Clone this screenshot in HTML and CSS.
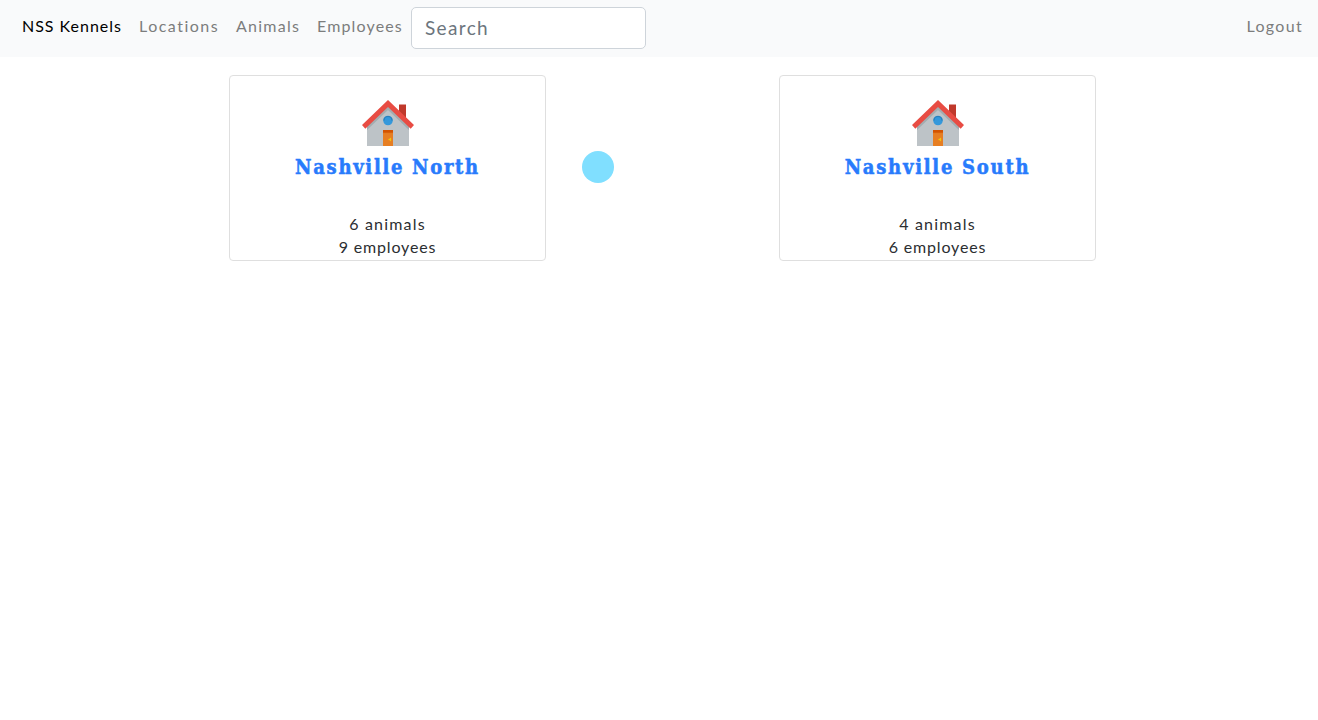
FILE: index.html
```html
<!DOCTYPE html>
<html lang="en">
<head>
<meta charset="utf-8">
<title>NSS Kennels</title>
<link rel="stylesheet" href="styles.css">
</head>
<body>
<svg class="symbols" width="0" height="0" aria-hidden="true">
  <symbol id="house" viewBox="0 0 52 46">
    <path fill="#c0392b" d="M37 4.500h7v16H37z"/>
    <path fill="#bdc3c7" d="M26 6 5 26v20h42V26z"/>
    <path fill="#a3adb0" d="M26 5 5 25v5L26 10l21 20v-5z"/>
    <path fill="#e84c43" d="M26 0 0 25l3.300 3.700L26 7l22.700 21.700L52 25z"/>
    <circle cx="26" cy="20.500" r="4.800" fill="#3498db"/>
    <path fill="none" stroke="#2980b9" stroke-width="1.200" d="M22 20.500a4 4 0 0 1 8 0"/>
    <path fill="#e67e22" d="M21 30h10v16H21z"/>
    <path fill="#d35400" d="M21 30h10v2.200l-1 1-1-1-1 1-1-1-1 1-1-1-1 1-1-1-1 1-1-1z"/>
    <path fill="none" stroke="#f1c40f" stroke-width="1.300" stroke-linecap="round" d="M27 39.500h1.500m0-1v2"/>
  </symbol>
</svg>
<nav class="navbar">
  <a class="brand">NSS Kennels</a>
  <a class="link locations">Locations</a>
  <a class="link animals">Animals</a>
  <a class="link employees">Employees</a>
  <input class="search" type="search" placeholder="Search" aria-label="Search">
  <a class="link logout">Logout</a>
</nav>
<main class="locations-list">
  <section class="card">
    <svg class="house"><use href="#house"/></svg>
    <h2 class="title">Nashville North</h2>
    <div class="count count-animals">6 animals</div>
    <div class="count">9 employees</div>
  </section>
  <section class="card">
    <svg class="house"><use href="#house"/></svg>
    <h2 class="title title-south">Nashville South</h2>
    <div class="count count-animals">4 animals</div>
    <div class="count">6 employees</div>
  </section>
</main>
<div class="pointer"></div>
</body>
</html>
```
FILE: styles.css
```css
* { box-sizing: border-box; }
body {
  margin: 0;
  background: #fff;
  color: #2b2e31;
  font: 16px/23px Lato, sans-serif;
}
.symbols { position: absolute; }
.navbar {
  display: flex;
  height: 57px;
  padding: 7px 15px 0 22px;
  background: #f9fafb;
}
.brand, .link {
  flex: none;
  padding-top: 7px;
  white-space: nowrap;
}
.brand { width: 117px; color: #000; letter-spacing: 0.98px; }
.link { color: #7c7d7d; }
.locations { width: 97px; letter-spacing: 1.5px; }
.animals { width: 81px; letter-spacing: 1.25px; }
.employees { width: 94px; letter-spacing: 1.15px; }
.logout { margin-left: auto; letter-spacing: 1.3px; }
.search {
  width: 235px;
  height: 42px;
  padding: 0 13px 2px;
  border: 1px solid #ced4da;
  border-radius: 5px;
  background: #fff;
  font: 19px Lato, sans-serif;
  letter-spacing: 1.35px;
}
.search::placeholder { color: #6c757d; opacity: 1; }
.locations-list {
  display: flex;
  gap: 233px;
  padding: 18px 0 0 229px;
}
.card {
  display: flex;
  flex-direction: column;
  align-items: center;
  width: 317px;
  height: 186px;
  padding-top: 24px;
  border: 1px solid #dfdfdf;
  border-radius: 4px;
}
.house { width: 52px; height: 46px; flex: none; }
.title {
  margin: 7px 0 0;
  color: #287bfc;
  font: bold 20px/28px "DejaVu Serif Condensed", "DejaVu Serif", serif;
  font-stretch: condensed;
  letter-spacing: 1.7px;
  white-space: nowrap;
  -webkit-text-stroke: 0.5px #287bfc;
}
.title-south { letter-spacing: 1.75px; }
.count { letter-spacing: 0.85px; }
.count-animals { margin-top: 31px; letter-spacing: 1.2px; }
.pointer {
  position: absolute;
  left: 582px;
  top: 151px;
  width: 32px;
  height: 32px;
  border-radius: 50%;
  background: #80dfff;
}
```
